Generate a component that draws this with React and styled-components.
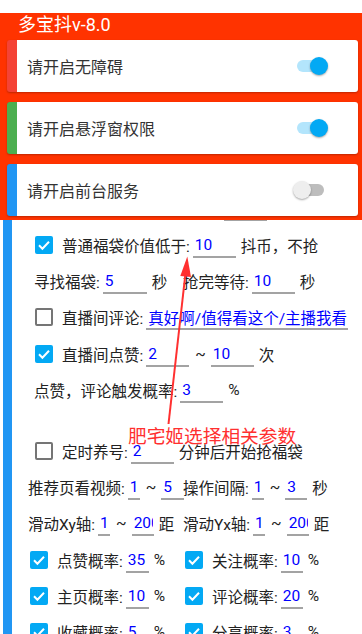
import React from "react";
import styled, { createGlobalStyle } from "styled-components";

const GlobalStyle = createGlobalStyle`
  html, body {
    margin: 0;
    padding: 0;
    background: #fff;
  }
  body {
    font-family: Roboto, "Noto Sans CJK SC", sans-serif;
  }
`;

const Page = styled.div`
  position: relative;
  width: 362px;
  height: 634px;
  overflow: hidden;
  background: #fff;
`;

const Header = styled.div`
  position: relative;
  z-index: 2;
  background: #ff3300;
  padding: 0 4px 4px 7px;
`;

const Title = styled.div`
  margin: 13px 0 3px 11px;
  height: 24px;
  line-height: 24px;
  font-size: 18px;
  color: #fff;
`;

const PermCard = styled.div`
  height: 52px;
  box-sizing: border-box;
  margin-bottom: ${(p) => (p.$last ? 0 : 10)}px;
  background: #fff;
  border-radius: 3px;
  border-left: 10px solid ${(p) => p.$stripe};
  display: flex;
  align-items: center;
  justify-content: space-between;
  padding: 0 30px 0 10px;
  box-shadow: 0 1px 2px rgba(0, 0, 0, 0.25);
  font-size: 16px;
  color: #333;
`;

const Switch = styled.span`
  position: relative;
  width: 35px;
  height: 18px;
  flex: none;
`;

const Track = styled.span`
  position: absolute;
  left: 4px;
  top: 3px;
  width: 27px;
  height: 12px;
  border-radius: 6px;
  background: ${(p) => (p.$on ? "#b3e5fc" : "#bdbdbd")};
`;

const Thumb = styled.span`
  position: absolute;
  top: 0;
  left: ${(p) => (p.$on ? 17 : 0)}px;
  width: 18px;
  height: 18px;
  border-radius: 50%;
  background: ${(p) => (p.$on ? "#03a9f4" : "#eeeeee")};
  box-shadow: 0 1px 2px rgba(0, 0, 0, 0.35);
`;

const Settings = styled.div`
  position: relative;
  z-index: 1;
  margin: -30px 0 0 3px;
  border-left: 9px solid #2196f3;
  background: #fff;
  font-size: 15.5px;
  color: #222;
`;

const Row = styled.div`
  display: flex;
  align-items: center;
  height: 36.4px;
  padding-left: ${(p) => p.$indent}px;
  white-space: nowrap;
`;

const Half = styled.div`
  display: flex;
  align-items: center;
  width: ${(p) => p.$w}px;
  flex: none;
`;

const Spacer = styled.div`
  height: 24px;
`;

const Label = styled.span``;

const Field = styled.input`
  width: ${(p) => p.$w}px;
  height: 26px;
  box-sizing: border-box;
  margin: 0 0 0 3px;
  padding: 2px 1px 0 2px;
  border: none;
  border-bottom: 2px solid #a3a3a3;
  border-radius: 0;
  background: transparent;
  font: inherit;
  color: #0000ff;
  outline: none;
  flex: none;
`;

const Tilde = styled.span`
  margin: 0 2px 0 6px;
`;

const Unit = styled.span`
  margin-left: 5px;
`;

const Box = styled.span`
  width: 18px;
  height: 18px;
  box-sizing: border-box;
  border-radius: 2px;
  margin-right: 9px;
  flex: none;
  display: flex;
  align-items: center;
  justify-content: center;
  background: ${(p) => (p.$checked ? "#03a9f4" : "transparent")};
  border: ${(p) => (p.$checked ? "none" : "2px solid #757575")};
`;

const Note = styled.div`
  position: absolute;
  z-index: 3;
  left: 128px;
  top: 427px;
  font-family: "Noto Sans CJK SC", sans-serif;
  font-size: 18.7px;
  line-height: 16px;
  color: #ff3030;
  white-space: nowrap;
`;

const Arrow = styled.svg`
  position: absolute;
  z-index: 3;
  left: 0;
  top: 0;
  pointer-events: none;
`;

function Check({ checked }) {
  return (
    <Box $checked={checked}>
      {checked && (
        <svg width="18" height="18" viewBox="0 0 18 18">
          <polyline
            points="4,9.3 7.4,12.7 14,5.8"
            fill="none"
            stroke="#fff"
            strokeWidth="2"
          />
        </svg>
      )}
    </Box>
  );
}

function Toggle({ on }) {
  return (
    <Switch>
      <Track $on={on} />
      <Thumb $on={on} />
    </Switch>
  );
}

const perms = [
  { text: "请开启无障碍", stripe: "#f44336", on: true },
  { text: "请开启悬浮窗权限", stripe: "#4caf50", on: true },
  { text: "请开启前台服务", stripe: "#2196f3", on: false },
];

const rates = [
  ["点赞概率:", "35", "关注概率:", "10"],
  ["主页概率:", "10", "评论概率:", "20"],
  ["收藏概率:", "5", "分享概率:", "3"],
];

export default function App() {
  return (
    <Page>
      <GlobalStyle />
      <Header>
        <Title>多宝抖v-8.0</Title>
        {perms.map((p, i) => (
          <PermCard key={p.text} $stripe={p.stripe} $last={i === perms.length - 1}>
            <span>{p.text}</span>
            <Toggle on={p.on} />
          </PermCard>
        ))}
      </Header>

      <Settings>
        <Row $indent={209}>
          <Field $w={43} defaultValue="" />
        </Row>
        <Row $indent={23}>
          <Check checked />
          <Label>普通福袋价值低于:</Label>
          <Field $w={43} defaultValue="10" />
          <Unit>抖币，不抢</Unit>
        </Row>
        <Row $indent={22}>
          <Half $w={149}>
            <Label>寻找福袋:</Label>
            <Field $w={44} defaultValue="5" />
            <Unit>秒</Unit>
          </Half>
          <Label>抢完等待:</Label>
          <Field $w={43} defaultValue="10" />
          <Unit>秒</Unit>
        </Row>
        <Row $indent={23}>
          <Check />
          <Label>直播间评论:</Label>
          <Field $w={202} defaultValue="真好啊/值得看这个/主播我看好你" />
        </Row>
        <Row $indent={23}>
          <Check checked />
          <Label>直播间点赞:</Label>
          <Field $w={43} defaultValue="2" />
          <Tilde>~</Tilde>
          <Field $w={43} defaultValue="10" />
          <Unit>次</Unit>
        </Row>
        <Row $indent={22}>
          <Label>点赞，评论触发概率:</Label>
          <Field $w={43} defaultValue="3" />
          <Unit>%</Unit>
        </Row>
        <Spacer />
        <Row $indent={23}>
          <Check />
          <Label>定时养号:</Label>
          <Field $w={43} defaultValue="2" />
          <Unit>分钟后开始抢福袋</Unit>
        </Row>
        <Row $indent={16}>
          <Half $w={155}>
            <Label>推荐页看视频:</Label>
            <Field $w={12} defaultValue="1" />
            <Tilde>~</Tilde>
            <Field $w={23} defaultValue="5" />
          </Half>
          <Label>操作间隔:</Label>
          <Field $w={12} defaultValue="1" />
          <Tilde>~</Tilde>
          <Field $w={22} defaultValue="3" />
          <Unit>秒</Unit>
        </Row>
        <Row $indent={16}>
          <Half $w={155}>
            <Label>滑动Xy轴:</Label>
            <Field $w={12} defaultValue="1" />
            <Tilde>~</Tilde>
            <Field $w={22} defaultValue="200" />
            <Unit>距</Unit>
          </Half>
          <Label>滑动Yx轴:</Label>
          <Field $w={12} defaultValue="1" />
          <Tilde>~</Tilde>
          <Field $w={22} defaultValue="200" />
          <Unit>距</Unit>
        </Row>
        {rates.map(([a, av, b, bv]) => (
          <Row $indent={18} key={a}>
            <Half $w={155}>
              <Check checked />
              <Label>{a}</Label>
              <Field $w={23} defaultValue={av} />
              <Unit>%</Unit>
            </Half>
            <Check checked />
            <Label>{b}</Label>
            <Field $w={22} defaultValue={bv} />
            <Unit>%</Unit>
          </Row>
        ))}
      </Settings>

      <Arrow width="362" height="634" viewBox="0 0 362 634">
        <line x1="168.5" y1="424" x2="185.4" y2="274" stroke="#ff3030" strokeWidth="2" />
        <polygon points="187.3,256.5 180.3,276 191,277" fill="#ff3030" />
      </Arrow>
      <Note>肥宅姬选择相关参数</Note>
    </Page>
  );
}
